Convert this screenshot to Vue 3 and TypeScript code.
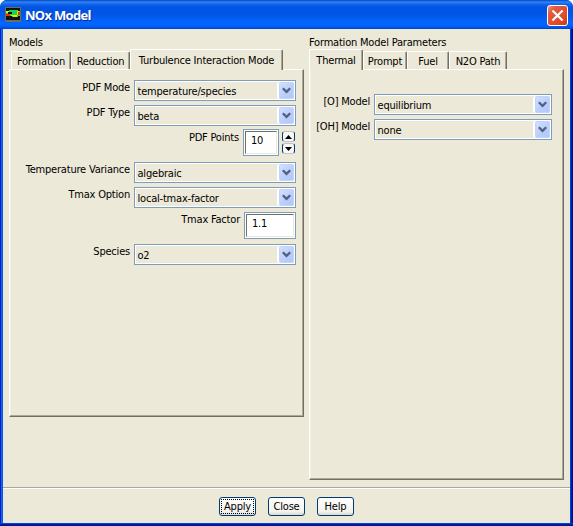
<script setup lang="ts">
interface Field {
  label: string
  value: string
  kind: 'select' | 'spin' | 'text'
}
interface Tab {
  label: string
  width: number
}

const modelTabs: Tab[] = [
  { label: 'Formation', width: 60 },
  { label: 'Reduction', width: 59 },
  { label: 'Turbulence Interaction Mode', width: 153 },
]
const formationTabs: Tab[] = [
  { label: 'Thermal', width: 54 },
  { label: 'Prompt', width: 44 },
  { label: 'Fuel', width: 42 },
  { label: 'N2O Path', width: 58 },
]
const modelFields: Field[] = [
  { label: 'PDF Mode', value: 'temperature/species', kind: 'select' },
  { label: 'PDF Type', value: 'beta', kind: 'select' },
  { label: 'PDF Points', value: '10', kind: 'spin' },
  { label: 'Temperature Variance', value: 'algebraic', kind: 'select' },
  { label: 'Tmax Option', value: 'local-tmax-factor', kind: 'select' },
  { label: 'Tmax Factor', value: '1.1', kind: 'text' },
  { label: 'Species', value: 'o2', kind: 'select' },
]
const formationFields: Field[] = [
  { label: '[O] Model', value: 'equilibrium', kind: 'select' },
  { label: '[OH] Model', value: 'none', kind: 'select' },
]
const buttons = ['Apply', 'Close', 'Help']
</script>

<template>
  <div class="window">
    <header class="titlebar">
      <svg class="app-icon" width="16" height="15" viewBox="0 0 16 15" shape-rendering="crispEdges">
        <rect width="16" height="15" fill="#6c6c64" />
        <rect x="1" y="1" width="14" height="12" fill="#15100c" />
        <path d="M1 4h3V3h9v1h2v5h-2v1H7V9H1z" fill="#16e02c" />
        <path d="M1 4h3v2H1zM6 8h6v1H6z" fill="#e8f010" />
        <path d="M12 4h2v4h-2zM8 9h4v1H8z" fill="#f2d800" />
        <path d="M1 7h4v2H1zM13 5h2v3h-2z" fill="#f03008" />
        <path d="M7 4h4v2H7z" fill="#10c8b0" />
        <path d="M3 5h4v2H3z" fill="#101010" />
      </svg>
      <h1 class="title">NOx Model</h1>
      <button class="close" aria-label="Close window">
        <svg width="21" height="21" viewBox="0 0 21 21">
          <path d="M6.2 6.2l8.6 8.6M14.8 6.2l-8.6 8.6" stroke="#fff" stroke-width="2.2" stroke-linecap="square" />
        </svg>
      </button>
    </header>

    <main class="body">
      <div class="groups">
        <section class="group models">
          <h2 class="heading">Models</h2>
          <nav class="tabs">
            <button
              v-for="(t, i) in modelTabs"
              :key="t.label"
              class="tab"
              :class="{ active: i === 2 }"
              :style="{ width: t.width + 'px' }"
            ><span>{{ t.label }}</span></button>
          </nav>
          <div class="panel">
            <div v-for="f in modelFields" :key="f.label" class="row" :class="f.kind">
              <label class="label">{{ f.label }}</label>
              <div v-if="f.kind === 'select'" class="combo">
                <span class="value">{{ f.value }}</span>
                <span class="drop">
                  <svg width="9" height="7" viewBox="0 0 9 7"><path d="M.8 1.2l3.7 3.7 3.7-3.7" fill="none" stroke="#4d6185" stroke-width="2.3" /></svg>
                </span>
              </div>
              <div v-else class="entry"><span>{{ f.value }}</span></div>
              <div v-if="f.kind === 'spin'" class="spinner">
                <span class="step"><svg width="7" height="4" viewBox="0 0 7 4"><path d="M0 4L3.5 0 7 4z" /></svg></span>
                <span class="step"><svg width="7" height="4" viewBox="0 0 7 4"><path d="M0 0h7L3.5 4z" /></svg></span>
              </div>
            </div>
          </div>
        </section>

        <section class="group formation">
          <h2 class="heading">Formation Model Parameters</h2>
          <nav class="tabs">
            <button
              v-for="(t, i) in formationTabs"
              :key="t.label"
              class="tab"
              :class="{ active: i === 0 }"
              :style="{ width: t.width + 'px' }"
            ><span>{{ t.label }}</span></button>
          </nav>
          <div class="panel">
            <div v-for="f in formationFields" :key="f.label" class="row" :class="f.kind">
              <label class="label">{{ f.label }}</label>
              <div class="combo">
                <span class="value">{{ f.value }}</span>
                <span class="drop">
                  <svg width="9" height="7" viewBox="0 0 9 7"><path d="M.8 1.2l3.7 3.7 3.7-3.7" fill="none" stroke="#4d6185" stroke-width="2.3" /></svg>
                </span>
              </div>
            </div>
          </div>
        </section>
      </div>

      <footer class="actions">
        <button v-for="(b, i) in buttons" :key="b" class="action" :class="{ focused: i === 0 }">
          <span>{{ b }}</span>
        </button>
      </footer>
    </main>
    <div class="bottom-edge"></div>
  </div>
</template>

<style>
body {
  background: #fff;
}
</style>

<style scoped>
* {
  box-sizing: border-box;
}
.window {
  width: 573px;
  height: 526px;
  display: flex;
  flex-direction: column;
  overflow: hidden;
  border-radius: 7px 7px 0 0;
  background: #0a50e0;
  color: #000;
  font: 11px/14px "DejaVu Sans Condensed", "DejaVu Sans", sans-serif;
  font-stretch: condensed;
  letter-spacing: -0.2px;
  white-space: nowrap;
}
button {
  margin: 0;
  padding: 0;
  border: 0;
  color: inherit;
  font: inherit;
  letter-spacing: inherit;
}
.titlebar {
  flex: none;
  height: 29px;
  display: flex;
  align-items: flex-start;
  padding: 5px 5px 0 5px;
  background: linear-gradient(#0842c0 0, #2f86f8 2px, #1468ee 4px, #0054e3 7px, #0055e5 14px, #0363fa 21px, #0366ff 25px, #005af0 27px, #0040c8 29px);
}
.app-icon {
  margin-top: 2px;
}
.title {
  flex: 1;
  margin: 1px 0 0 4px;
  color: #fff;
  font: bold 13px/19px "Open Sans", sans-serif;
  letter-spacing: -0.7px;
  text-shadow: 1px 1px #0a2a90;
}
.close {
  width: 21px;
  height: 21px;
  border: 1px solid #fff;
  border-radius: 3px;
  background: linear-gradient(135deg, #eb9a86 0, #e35a3e 22%, #e04a2a 70%, #c83c18);
}
.close svg {
  display: block;
  margin: -1px;
}
.body {
  flex: 1;
  display: flex;
  flex-direction: column;
  margin: 0 3px;
  background: #ece9d8;
  box-shadow: -1px 0 #0855dd, -2px 0 #166aee, -3px 0 #0019cf, 1px 0 #0441d8, 2px 0 #001ea0, 3px 0 #00138c;
}
.bottom-edge {
  position: relative;
  height: 3px;
  background: linear-gradient(#0441d8 1px, #001ea0 1px 2px, #00138c 2px);
}
.groups {
  height: 458px;
  display: flex;
  gap: 5px;
  padding: 6px 6px 0;
}
.group {
  display: flex;
  flex-direction: column;
}
.models {
  width: 295px;
}
.formation {
  width: 255px;
}
.heading {
  margin: 0;
  height: 14px;
  padding-top: 1px;
  font: inherit;
}
.tabs {
  display: flex;
  align-items: flex-end;
  height: 20px;
}
.models .tabs {
  padding-left: 2px;
}
.tab {
  height: 18px;
  padding-top: 3px;
  border-top: 1px solid #fff;
  border-left: 1px solid #fff;
  border-right: 1px solid #716f64;
  border-radius: 2px 2px 0 0;
  background: #ece9d8;
  box-shadow: inset -1px 0 #aca899;
  text-align: center;
}
.tab.active {
  position: relative;
  height: 21px;
  margin-bottom: -1px;
  padding-bottom: 2px;
}
.tab span {
  display: block;
}
.panel {
  border: 1px solid #fff;
  border-right-color: #716f64;
  border-bottom-color: #716f64;
  box-shadow: inset -1px -1px #aca899, inset 1px 0 #f4f2e8;
}
.models .panel {
  height: 348px;
  padding: 10px 7px 0 0;
}
.formation .panel {
  height: 411px;
  padding: 24px 11px 0 0;
}
.row {
  display: flex;
  justify-content: flex-end;
  align-items: flex-start;
  gap: 4px;
  height: 25px;
}
.row.spin {
  height: 32px;
  margin-top: -1px;
  margin-bottom: 1px;
}
.row.text {
  height: 32px;
}
.label {
  margin-top: 1px;
}
.spin .label {
  margin-top: 2px;
}
.combo {
  width: 162px;
  height: 21px;
  display: flex;
  justify-content: space-between;
  border: 1px solid #7f9db9;
  box-shadow: inset 0 0 0 1px #fff;
  padding: 1px;
}
.formation .combo {
  width: 178px;
}
.value {
  padding: 3px 0 0 1.5px;
}
.drop {
  width: 17px;
  height: 17px;
  display: flex;
  align-items: center;
  justify-content: center;
  border: 0 solid #fff;
  border-left-width: 2px;
  border-radius: 3px;
  background: linear-gradient(135deg, #d6e2fd, #b9cdf9 60%, #aec8f7);
  box-shadow: inset 0 0 0 1px #c3d3fd;
}
.entry {
  width: 52px;
  height: 27px;
  border: 1px solid #7f9db9;
  padding: 1px;
  background: #ece9d8;
  box-shadow: inset 0 0 0 1px #fff;
}
.spin .entry {
  width: 36px;
}
.entry span {
  display: block;
  height: 23px;
  padding: 2px 0 0 5px;
  background: #fff;
  border: 1px solid #ece9d8;
  border-top-color: #716f64;
  border-left-color: #716f64;
}
.spinner {
  display: flex;
  flex-direction: column;
  gap: 1px;
  margin: 2px 1px 0 -1px;
}
.step {
  width: 13px;
  height: 11px;
  display: flex;
  align-items: center;
  justify-content: center;
  border: 1px solid #003c74;
  border-top-color: #b8c4cc;
  border-bottom-color: #b8c4cc;
  border-radius: 3px;
  background: #f8f7f2;
}
.actions {
  flex: 1;
  display: flex;
  justify-content: center;
  gap: 12px;
  padding: 9px 0 0;
  border-top: 1px solid #aca899;
  box-shadow: inset 0 1px #fff;
}
.action {
  width: 37px;
  height: 19px;
  border: 1px solid #003c74;
  border-radius: 3px;
  background: linear-gradient(#fff, #f3f2ec 80%, #dcd8cc);
  padding: 1px;
}
.action span {
  display: block;
  height: 15px;
  line-height: 15px;
}
.focused span {
  outline: 1px dotted #000;
  outline-offset: -1px;
}
</style>
